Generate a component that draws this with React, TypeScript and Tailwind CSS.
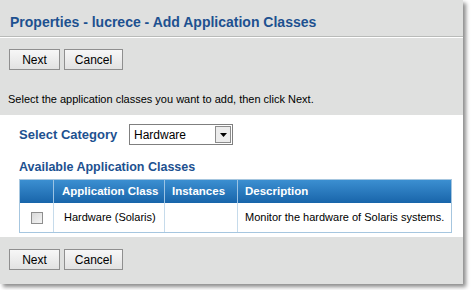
export default function App() {
  const font = { fontFamily: '"Liberation Sans", Arial, sans-serif' };
  return (
    <div className="w-[471px] h-[290px] bg-white" style={font}>
      <div className="w-[463px] h-[284px] bg-[#dfe0df] shadow-[3px_3px_4px_rgba(0,0,0,0.45)] flex flex-col">
        <div className="h-[37px] px-[10px] pt-[14px] border-b border-[#b9bbb9]">
          <h1 className="text-[14px] leading-[17px] font-bold text-[#1d5190] whitespace-nowrap">
            Properties - lucrece - Add Application Classes
          </h1>
        </div>
        <div className="h-px bg-white" />
        <div className="flex gap-[4px] px-[9px] pt-[11px]">
          <Btn label="Next" w="w-[51px]" />
          <Btn label="Cancel" w="w-[59px]" />
        </div>
        <p className="px-[8px] pt-[22px] h-[45px] text-[11px] leading-[14px] text-black whitespace-nowrap">
          Select the application classes you want to add, then click Next.
        </p>
        <div className="bg-white h-[122px] pl-[19px] pr-[11px] pt-[9px]">
          <div className="flex items-center h-[21px]">
            <span className="text-[13px] font-bold text-[#1d5190] w-[110px] shrink-0">Select Category</span>
            <div className="w-[104px] h-[21px] border border-[#7f7f7f] flex items-center shrink-0">
              <span className="flex-1 pl-[4px] text-[12px] text-black">Hardware</span>
              <div className="w-[16px] h-[17px] mr-[1px] border border-[#8c8c8c] bg-[#ececec] flex items-center justify-center">
                <svg width="7" height="4" viewBox="0 0 7 4"><path d="M0 0h7L3.5 4z" fill="#000" /></svg>
              </div>
            </div>
          </div>
          <div className="h-[34px] pt-[14px] text-[12.5px] leading-[16px] font-bold text-[#1d5190] whitespace-nowrap">
            Available Application Classes
          </div>
          <div className="border border-[#a6c6df] w-[433px]">
            <div className="flex h-[23px] bg-gradient-to-b from-[#3b8fd1] to-[#1865aa] text-white text-[11.5px] font-bold items-center whitespace-nowrap">
              <div className="w-[34px] shrink-0 h-full border-r border-[#9cc3e3]" />
              <div className="w-[111px] shrink-0 h-full pl-[8px] border-r border-[#9cc3e3] flex items-center">Application Class</div>
              <div className="w-[73px] shrink-0 h-full pl-[7px] border-r border-[#9cc3e3] flex items-center">Instances</div>
              <div className="flex-1 pl-[7px]">Description</div>
            </div>
            <div className="flex h-[29px] items-center text-[11px] text-black whitespace-nowrap">
              <div className="w-[34px] shrink-0 h-full border-r border-[#c6dbeb] flex items-center justify-center">
                <div className="w-[12px] h-[12px] border border-[#8e8e8e] bg-gradient-to-br from-[#d9d9d9] to-[#f4f4f4]" />
              </div>
              <div className="w-[111px] shrink-0 h-full pl-[10px] border-r border-[#c6dbeb] flex items-center">Hardware (Solaris)</div>
              <div className="w-[73px] shrink-0 h-full border-r border-[#c6dbeb]" />
              <div className="flex-1 pl-[7px]">Monitor the hardware of Solaris systems.</div>
            </div>
          </div>
        </div>
        <div className="flex gap-[4px] px-[9px] pt-[12px]">
          <Btn label="Next" w="w-[51px]" />
          <Btn label="Cancel" w="w-[59px]" />
        </div>
      </div>
    </div>
  );
}

function Btn({ label, w }: { label: string; w: string }) {
  return (
    <button className={`${w} h-[21px] border border-[#8f8f8f] bg-gradient-to-b from-[#f7f7f7] to-[#e2e2e2] text-[12px] text-black leading-none`}>
      {label}
    </button>
  );
}
